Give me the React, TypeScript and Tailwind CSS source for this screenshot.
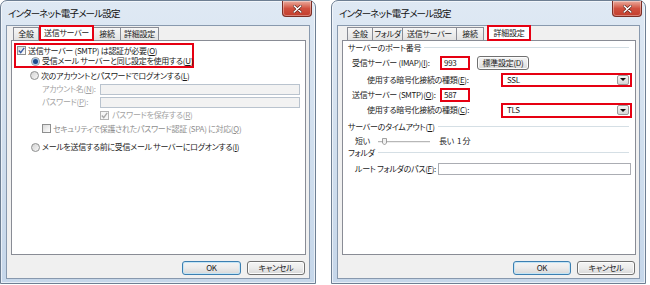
import React from "react";

const RED = "border-[#e60012]";

function CloseButton() {
  return (
    <div className="mr-[3px] flex h-[16px] w-[30px] items-center justify-center self-start rounded-b-[4px] border border-t-0 border-[#7b2e25] bg-gradient-to-b from-[#e9aa9d] via-[#d0503f] to-[#c23d2c] shadow-[inset_0_0_0_1px_rgba(255,255,255,0.35)]">
      <svg width="9" height="8" viewBox="0 0 9 8">
        <path d="M1.2 1 L7.8 7 M7.8 1 L1.2 7" stroke="#5a1d16" strokeWidth="2.6" strokeLinecap="round" />
        <path d="M1.2 1 L7.8 7 M7.8 1 L1.2 7" stroke="white" strokeWidth="1.6" strokeLinecap="round" />
      </svg>
    </div>
  );
}

function Window({ width, children }: { width: string; children: React.ReactNode }) {
  return (
    <div
      className={`flex h-[284px] ${width} shrink-0 flex-col rounded-t-[7px] border border-[#6e7f93] bg-gradient-to-b from-[#dfe9f4] via-[#d1dfee] to-[#c6d7ea] shadow-[inset_0_0_0_1px_rgba(255,255,255,0.6)]`}
    >
      <div className="flex h-[24px] items-center justify-between pl-[7px]">
        <span className="pt-[1px] text-[9.5px] tracking-[-0.8px] text-[#111]">インターネット電子メール設定</span>
        <CloseButton />
      </div>
      <div className="mx-[5px] mb-[4px] flex flex-1 flex-col border border-[#8899ae] bg-[#f0f0f0] pl-[4px] pr-[3px]">
        {children}
      </div>
    </div>
  );
}

function Tab({ label, w, selected }: { label: string; w: string; selected?: boolean }) {
  if (selected) {
    return (
      <div className={`z-10 -mb-px flex h-[16px] ${w} items-center justify-center border-2 ${RED} bg-white`}>
        {label}
      </div>
    );
  }
  return (
    <div
      className={`flex h-[13px] ${w} items-center justify-center border border-b-0 border-[#898c95] bg-gradient-to-b from-[#f7f7f7] to-[#e2e2e2] -ml-px first:ml-0`}
    >
      {label}
    </div>
  );
}

function Check({ checked, disabled }: { checked?: boolean; disabled?: boolean }) {
  return (
    <span
      className={`flex h-[9px] w-[9px] shrink-0 items-center justify-center border ${
        disabled ? "border-[#b4b4b4] bg-[#f6f6f6]" : "border-[#8e8f8f] bg-gradient-to-br from-[#d9d9d9] to-white"
      }`}
    >
      {checked && (
        <svg width="7" height="7" viewBox="0 0 7 7">
          <path d="M0.8 3.6 L2.7 5.6 L6.2 0.9" fill="none" stroke={disabled ? "#a9a9a9" : "#3a5ea6"} strokeWidth="1.4" />
        </svg>
      )}
    </span>
  );
}

function Radio({ checked }: { checked?: boolean }) {
  return (
    <span className="flex h-[9px] w-[9px] shrink-0 items-center justify-center rounded-full border border-[#8e8f8f] bg-gradient-to-br from-[#d3d3d3] to-[#f8f8f8]">
      {checked && <span className="h-[5px] w-[5px] rounded-full bg-[#1d4c8c] shadow-[0_0_1px_1px_#a7c7ea]" />}
    </span>
  );
}

function Button({ label, w, primary }: { label: string; w: string; primary?: boolean }) {
  return (
    <div
      className={`flex h-[14px] ${w} items-center justify-center rounded-[3px] border bg-gradient-to-b from-[#f4f4f4] via-[#ebebeb] to-[#d8d8d8] ${
        primary ? "border-[#3c7fb1] shadow-[inset_0_0_0_1px_#c4e5f6]" : "border-[#707070] shadow-[inset_0_0_0_1px_#fcfcfc]"
      }`}
    >
      {label}
    </div>
  );
}

function Dropdown({ value }: { value: string }) {
  return (
    <div className={`flex h-full w-[131px] items-center justify-between border-2 ${RED} bg-white pl-[4px] pr-[1px]`}>
      <span>{value}</span>
      <span className="flex h-[10px] w-[12px] items-center justify-center rounded-[2px] border border-[#9a9a9a] bg-gradient-to-b from-[#f5f5f5] to-[#d6d6d6]">
        <svg width="6" height="3" viewBox="0 0 6 3">
          <path d="M0 0 H6 L3 3 Z" fill="#111" />
        </svg>
      </span>
    </div>
  );
}

function GroupLabel({ children }: { children: React.ReactNode }) {
  return (
    <div className="flex items-center pl-[5px] pr-[6px]">
      <span>{children}</span>
      <div className="ml-[3px] flex-1 border-t border-b border-t-[#d5dfe5] border-b-white" />
    </div>
  );
}

function SendServerPanel() {
  return (
    <div className="flex h-[215px] flex-col border border-[#898c95] bg-white">
      <div className={`ml-[2px] mt-[2px] flex h-[25px] w-[180px] flex-col border-2 ${RED}`}>
        <div className="flex h-[11px] items-center gap-[2px] pl-[1px]">
          <Check checked />
          <span>送信サーバー (SMTP) は認証が必要(<u>O</u>)</span>
        </div>
        <div className="flex h-[10px] items-center gap-[2px] pl-[15px]">
          <Radio checked />
          <span>受信メール サーバーと同じ設定を使用する(<u>U</u>)</span>
        </div>
      </div>
      <div className="flex h-[15px] items-center gap-[2px] pl-[18px]">
        <Radio />
        <span>次のアカウントとパスワードでログオンする(<u>L</u>)</span>
      </div>
      <div className="flex h-[12px] items-center pl-[30px] text-[#a3a3a3]">
        <span className="w-[58px] shrink-0">アカウント名(<u>N</u>):</span>
        <div className="h-[11px] w-[200px] border border-[#b9c3ce] bg-[#f2f2f2]" />
      </div>
      <div className="flex h-[14px] items-center pl-[30px] text-[#a3a3a3]">
        <span className="w-[58px] shrink-0">パスワード(<u>P</u>):</span>
        <div className="h-[11px] w-[200px] border border-[#b9c3ce] bg-[#f2f2f2]" />
      </div>
      <div className="flex h-[12px] items-center gap-[3px] pl-[88px] text-[#a3a3a3]">
        <Check checked disabled />
        <span>パスワードを保存する(<u>R</u>)</span>
      </div>
      <div className="flex h-[15px] items-center gap-[2px] pl-[30px] text-[#8f8f8f]">
        <Check />
        <span>セキュリティで保護されたパスワード認証 (SPA) に対応(<u>Q</u>)</span>
      </div>
      <div className="flex h-[22px] items-center gap-[2px] pl-[19px]">
        <Radio />
        <span>メールを送信する前に受信メール サーバーにログオンする(<u>I</u>)</span>
      </div>
    </div>
  );
}

function AdvancedPanel() {
  return (
    <div className="flex h-[215px] flex-col border border-[#898c95] bg-white">
      <div className="flex h-[14px] flex-col justify-center">
        <GroupLabel>サーバーのポート番号</GroupLabel>
      </div>
      <div className="flex h-[16px] items-center pl-[9px]">
        <span className="w-[88px] shrink-0">受信サーバー (IMAP)(<u>I</u>):</span>
        <div className={`flex h-[14px] w-[30px] items-center border-2 ${RED} pl-[2px]`}>993</div>
        <div className="ml-[7px]">
          <Button label="標準設定(D)" w="w-[52px]" />
        </div>
      </div>
      <div className="flex h-[17px] items-center pl-[24px]">
        <span className="w-[134px] shrink-0">使用する暗号化接続の種類(<u>E</u>):</span>
        <div className="h-[14px]">
          <Dropdown value="SSL" />
        </div>
      </div>
      <div className="flex h-[13px] items-center pl-[9px]">
        <span className="w-[88px] shrink-0">送信サーバー (SMTP)(<u>O</u>):</span>
        <div className={`flex h-[14px] w-[30px] items-center border-2 ${RED} pl-[2px]`}>587</div>
      </div>
      <div className="flex h-[18px] items-center pl-[24px]">
        <span className="w-[134px] shrink-0">使用する暗号化接続の種類(<u>C</u>):</span>
        <div className="h-[15px]">
          <Dropdown value="TLS" />
        </div>
      </div>
      <div className="flex h-[16px] flex-col justify-center">
        <GroupLabel>
          サーバーのタイムアウト(<u>T</u>)
        </GroupLabel>
      </div>
      <div className="flex h-[12px] items-center pl-[12px]">
        <span className="w-[23px] shrink-0">短い</span>
        <svg width="52" height="9" viewBox="0 0 52 9">
          <rect x="0" y="4" width="52" height="1" fill="#b7b7b7" />
          <rect x="0" y="5" width="52" height="1" fill="#eeeeee" />
          <path d="M4.5 1.5 H8.5 V6 L6.5 8 L4.5 6 Z" fill="#f1f1f1" stroke="#8a8a8a" strokeWidth="0.8" />
        </svg>
        <span className="ml-[9px]">長い&nbsp;&nbsp;1 分</span>
      </div>
      <div className="flex h-[12px] flex-col justify-center">
        <GroupLabel>フォルダ</GroupLabel>
      </div>
      <div className="flex h-[20px] items-center pl-[12px]">
        <span className="w-[83px] shrink-0">ルート フォルダのパス(<u>F</u>):</span>
        <div className="h-[12px] w-[193px] border border-[#abadb3] bg-white" />
      </div>
    </div>
  );
}

export default function App() {
  return (
    <div className="flex h-[285px] w-[650px] gap-[15px] overflow-hidden whitespace-nowrap bg-white font-['Noto_Sans_CJK_JP','Noto_Sans',sans-serif] text-[8px] leading-none tracking-[-0.3px] text-[#1a1a1a] [font-feature-settings:'palt']">
      <Window width="w-[316px]">
        <div className="flex h-[14px] items-end pl-[2px]">
          <Tab label="全般" w="w-[26px]" />
          <Tab label="送信サーバー" w="w-[55px]" selected />
          <Tab label="接続" w="w-[28px]" />
          <Tab label="詳細設定" w="w-[39px]" />
        </div>
        <SendServerPanel />
        <div className="mt-[6px] flex justify-end gap-[6px] pr-[1px]">
          <Button label="OK" w="w-[59px]" primary />
          <Button label="キャンセル" w="w-[58px]" />
        </div>
      </Window>
      <Window width="w-[315px]">
        <div className="flex h-[14px] items-end pl-[5px]">
          <Tab label="全般" w="w-[26px]" />
          <Tab label="フォルダ" w="w-[31px]" />
          <Tab label="送信サーバー" w="w-[55px]" />
          <Tab label="接続" w="w-[28px]" />
          <div className="w-[3px]" />
          <Tab label="詳細設定" w="w-[44px]" selected />
        </div>
        <AdvancedPanel />
        <div className="mt-[6px] flex justify-end gap-[6px] pr-[1px]">
          <Button label="OK" w="w-[58px]" primary />
          <Button label="キャンセル" w="w-[58px]" />
        </div>
      </Window>
    </div>
  );
}
